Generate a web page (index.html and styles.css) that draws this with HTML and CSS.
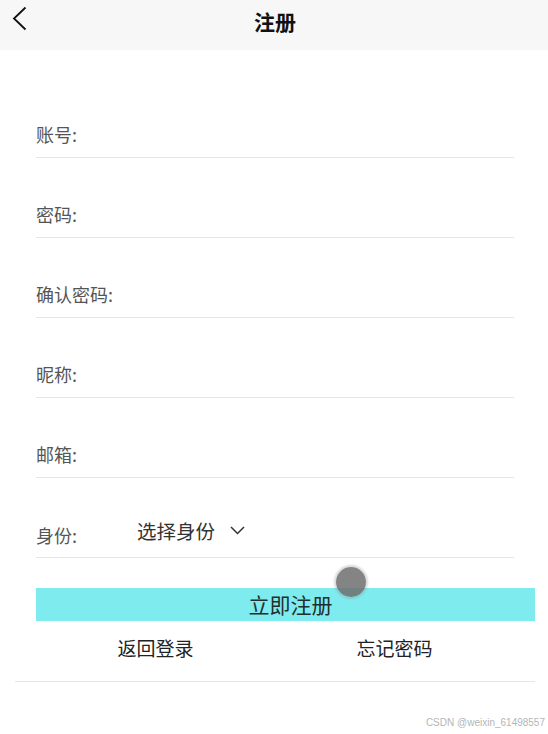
FILE: index.html
```html
<!DOCTYPE html>
<html lang="zh-CN">
<head>
<meta charset="utf-8">
<title>注册</title>
<link rel="stylesheet" href="styles.css">
</head>
<body>
<div class="page">
  <header class="topbar">
    <span class="back">
      <svg width="16" height="26" viewBox="0 0 16 26"><polyline points="13.5,1.5 2,12.5 13.5,23.5" fill="none" stroke="#111" stroke-width="1.8" stroke-linejoin="miter"/></svg>
    </span>
    <h1 class="title">注册</h1>
  </header>

  <form class="form">
    <div class="row"><span class="label">账号:</span></div>
    <div class="row"><span class="label">密码:</span></div>
    <div class="row"><span class="label">确认密码:</span></div>
    <div class="row"><span class="label">昵称:</span></div>
    <div class="row"><span class="label">邮箱:</span></div>
    <div class="row row-select">
      <span class="label label-fixed">身份:</span>
      <span class="select">选择身份
        <svg class="chev" width="15" height="9" viewBox="0 0 15 9"><polyline points="1,1 7.5,7.5 14,1" fill="none" stroke="#333" stroke-width="1.5"/></svg>
      </span>
    </div>
    <div class="submit">立即注册</div>
    <div class="links">
      <span class="link">返回登录</span>
      <span class="link">忘记密码</span>
    </div>
  </form>
  <div class="bottom-line"></div>

  <span class="touch"></span>
  <span class="watermark">CSDN @weixin_61498557</span>
</div>
</body>
</html>
```

FILE: styles.css
```css
* { box-sizing: border-box; }
html, body {
  margin: 0;
  padding: 0;
  background: #fff;
}
body {
  font-family: "Microsoft YaHei", "Noto Sans CJK SC", "Noto Sans", sans-serif;
  width: 548px;
  height: 734px;
  overflow: hidden;
}
.page {
  position: relative;
  width: 548px;
  height: 734px;
}
.topbar {
  height: 50px;
  background: #f7f7f7;
  display: flex;
  align-items: center;
  justify-content: center;
  position: relative;
}
.back {
  position: absolute;
  left: 12px;
  top: 6px;
  display: block;
  width: 16px;
  height: 26px;
}
.back svg { display: block; }
.title {
  margin: 0;
  font-size: 21px;
  font-weight: bold;
  color: #111;
  line-height: 24px;
  margin-top: -9px;
  padding-left: 2px;
}
.form {
  padding: 28px 34px 0 36px;
  margin: 0;
}
.row {
  height: 80px;
  border-bottom: 1px solid #e6e6e6;
  display: flex;
  align-items: flex-end;
  padding-bottom: 13px;
}
.label {
  font-size: 18px;
  line-height: 20px;
  color: #555;
}
.row-select {
  padding-bottom: 12px;
}
.label-fixed {
  width: 101px;
  flex: none;
}
.select {
  font-size: 19.5px;
  line-height: 20px;
  color: #333;
  display: flex;
  align-items: center;
  margin-bottom: 4px;
}
.chev {
  margin-left: 15px;
  margin-top: -2px;
  display: block;
}
.submit {
  margin-top: 30px;
  margin-right: -21px;
  height: 33px;
  background: #7eebee;
  color: #1f2f2f;
  font-size: 21px;
  line-height: 33px;
  text-align: center;
  padding-left: 10px;
}
.links {
  display: flex;
  height: 60px;
  padding-top: 17px;
}
.link {
  flex: 1;
  text-align: center;
  font-size: 19px;
  line-height: 20px;
  color: #222;
}
.bottom-line {
  margin: 0 13px 0 15px;
  height: 1px;
  background: #e6e6e6;
}
.touch {
  position: absolute;
  left: 336px;
  top: 567px;
  width: 30px;
  height: 30px;
  border-radius: 50%;
  background: rgba(110, 110, 110, 0.85);
  box-shadow: 0 0 2px 2px rgba(150, 150, 150, 0.35);
}
.watermark {
  position: absolute;
  right: 3px;
  top: 716px;
  font-family: "Liberation Sans", Arial, sans-serif;
  font-size: 10px;
  line-height: 13px;
  color: #b5b5b5;
}
```
